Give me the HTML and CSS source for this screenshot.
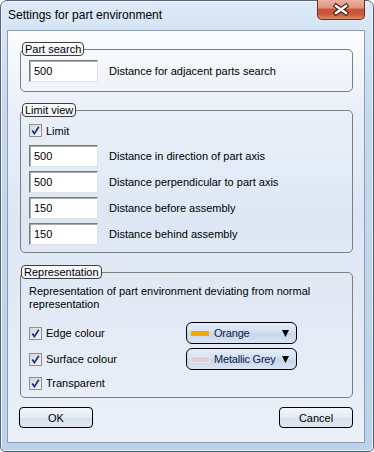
FILE: index.html
```html
<html>

<head>
    <link rel="stylesheet" href="styles.css">
</head>

<body>
    <div class="window">
        <!-- Title bar -->
        <div class="titlebar">
            <span class="title">Settings for part environment</span>
            <div class="close">
                <svg width="48" height="20" viewBox="0 0 48 20">
                    <path d="M19 7 L29 14 M29 7 L19 14" stroke="#4a1c12" stroke-width="4.6" stroke-linecap="square" />
                    <path d="M19 7 L29 14 M29 7 L19 14" stroke="#ffffff" stroke-width="2.4" stroke-linecap="square" />
                </svg>
            </div>
        </div>

        <div class="client">
            <!-- Part search -->
            <fieldset class="group group-search">
                <legend>Part search</legend>
                <div class="field-row">
                    <input class="num" value="500">
                    <span>Distance for adjacent parts search</span>
                </div>
            </fieldset>

            <!-- Limit view -->
            <fieldset class="group group-limit">
                <legend>Limit view</legend>
                <label class="check">
                    <span class="box"><svg width="13" height="13" viewBox="0 0 13 13"><path d="M3.2 6.6 L5.4 9.6 L9.8 2.8" fill="none" stroke="#1a2a8c" stroke-width="1.7" /></svg></span>
                    Limit
                </label>
                <div class="field-list">
                    <div class="field-row">
                        <input class="num" value="500">
                        <span>Distance in direction of part axis</span>
                    </div>
                    <div class="field-row">
                        <input class="num" value="500">
                        <span>Distance perpendicular to part axis</span>
                    </div>
                    <div class="field-row">
                        <input class="num" value="150">
                        <span>Distance before assembly</span>
                    </div>
                    <div class="field-row">
                        <input class="num" value="150">
                        <span>Distance behind assembly</span>
                    </div>
                </div>
            </fieldset>

            <!-- Representation -->
            <fieldset class="group group-repr">
                <legend>Representation</legend>
                <p class="note">Representation of part environment deviating from normal representation</p>
                <div class="repr-grid">
                    <label class="check">
                        <span class="box"><svg width="13" height="13" viewBox="0 0 13 13"><path d="M3.2 6.6 L5.4 9.6 L9.8 2.8" fill="none" stroke="#1a2a8c" stroke-width="1.7" /></svg></span>
                        Edge colour
                    </label>
                    <div class="dropdown">
                        <span class="swatch orange"></span>
                        <span class="dd-text">Orange</span>
                        <svg class="arrow" width="7" height="7" viewBox="0 0 7 7"><polygon points="0,0 7,0 3.5,7" fill="#000" /></svg>
                    </div>

                    <label class="check">
                        <span class="box"><svg width="13" height="13" viewBox="0 0 13 13"><path d="M3.2 6.6 L5.4 9.6 L9.8 2.8" fill="none" stroke="#1a2a8c" stroke-width="1.7" /></svg></span>
                        Surface colour
                    </label>
                    <div class="dropdown">
                        <span class="swatch grey"></span>
                        <span class="dd-text">Metallic Grey</span>
                        <svg class="arrow" width="7" height="7" viewBox="0 0 7 7"><polygon points="0,0 7,0 3.5,7" fill="#000" /></svg>
                    </div>

                    <label class="check last">
                        <span class="box"><svg width="13" height="13" viewBox="0 0 13 13"><path d="M3.2 6.6 L5.4 9.6 L9.8 2.8" fill="none" stroke="#1a2a8c" stroke-width="1.7" /></svg></span>
                        Transparent
                    </label>
                </div>
            </fieldset>

            <!-- Buttons -->
            <div class="buttons">
                <button class="btn">OK</button>
                <button class="btn">Cancel</button>
            </div>
        </div>
    </div>
</body>

</html>
```

FILE: styles.css
```css
* {
    box-sizing: border-box;
}

body {
    margin: 0;
    font-family: "Liberation Sans", Arial, sans-serif;
    background: #ffffff;
}

.window {
    width: 374px;
    height: 452px;
    border: 1px solid #56657c;
    border-radius: 7px 7px 5px 5px;
    background: linear-gradient(#dce9f7, #c6d9ef 25%, #bcd2eb);
    box-shadow: inset 1px 1px 0 #eef4fb, inset -1px -1px 0 #e4edf8;
    padding: 0 8px 8px 6px;
    display: flex;
    flex-direction: column;
}

.titlebar {
    height: 29px;
    display: flex;
    justify-content: space-between;
    align-items: flex-start;
}

.title {
    padding-left: 1px;
    line-height: 29px;
    font-size: 12px;
    color: #000;
}

.close {
    width: 48px;
    height: 20px;
    margin-top: -1px;
    border: 1px solid #6e2a1c;
    border-top: none;
    border-radius: 0 0 5px 5px;
    background: linear-gradient(#eab1a4, #e09380 40%, #c9563c 50%, #c85a3c 75%, #dc8c69);
    overflow: hidden;
}

.close svg {
    display: block;
    margin: -1px 0 0 -1px;
}

.client {
    flex: 1;
    border: 1px solid #8a9cb4;
    background: linear-gradient(#fbfcfe, #e9eff8 20%, #dde7f4 45%, #e3eaf5 70%, #ebf0f8);
    padding: 11px 11px 0 12px;
    font-size: 11px;
    color: #000;
}

/* group boxes */

.group {
    margin: 0;
    min-width: 0;
    border: 1px solid #7d7d7d;
    border-radius: 5px;
    padding: 4px 8px 9px 8px;
}

.group legend {
    margin-left: -7px;
    padding: 0 2px;
    height: 14px;
    line-height: 12px;
    border: 1px solid #3e3e3e;
    border-radius: 4px;
    background: linear-gradient(#ffffff, #eef2f8);
    font-size: 11px;
}

.group-limit {
    margin-top: 11px;
    padding: 7px 8px 7px 8px;
}

.group-repr {
    margin-top: 12px;
    padding: 6px 8px 3px 7px;
}

.field-list {
    display: flex;
    flex-direction: column;
    gap: 4px;
    margin-top: 8px;
}

.field-row {
    display: flex;
    align-items: center;
    gap: 11px;
}

.num {
    width: 69px;
    height: 22px;
    margin: 0;
    padding: 0 0 0 4px;
    border: 1px solid;
    border-color: #7b7b7b #e2e2e2 #e2e2e2 #7b7b7b;
    box-shadow: inset 1px 1px 0 #a9a9a9;
    background: #ffffff;
    font-family: "Liberation Sans", Arial, sans-serif;
    font-size: 11px;
    color: #000;
}

/* checkboxes */

.check {
    display: flex;
    align-items: center;
    gap: 4px;
    height: 13px;
}

.box {
    width: 13px;
    height: 13px;
    border: 1px solid #8e8f8f;
    background: linear-gradient(135deg, #d6d6d6, #f4f4f4);
    display: block;
}

.box svg {
    display: block;
    margin: -1px 0 0 -1px;
}

/* representation */

.note {
    margin: 0 0 0 1px;
    line-height: 13px;
    width: 320px;
}

.repr-grid {
    display: grid;
    grid-template-columns: 157px 111px;
    grid-template-rows: 26px 26px 22px;
    align-items: center;
    margin-top: 9px;
    padding-left: 1px;
}

.dropdown {
    width: 111px;
    height: 22px;
    border: 1px solid #000;
    border-radius: 6px;
    background: linear-gradient(#e6eef8, #d3e0f0 45%, #c6d6ea 55%, #dbe5f2);
    display: flex;
    align-items: center;
    padding: 0 7px 0 4px;
}

.swatch {
    flex-shrink: 0;
    width: 18px;
    height: 5px;
    margin-right: 5px;
}

.orange {
    background: #f7a600;
}

.grey {
    background: #d8d0d5;
    box-shadow: 0 0 0 1px #eeeaf0;
}

.dd-text {
    flex: 1;
    white-space: nowrap;
    overflow: hidden;
    letter-spacing: -0.2px;
    color: #10204a;
}

.arrow {
    flex-shrink: 0;
    display: block;
    margin-left: 2px;
}

/* buttons */

.buttons {
    display: flex;
    justify-content: space-between;
    margin: 9px 0 0 -1px;
}

.btn {
    width: 74px;
    height: 21px;
    margin: 0;
    border: 1px solid #000;
    border-radius: 4px;
    background: linear-gradient(#f3f6fb, #e6edf6 45%, #d8e2ef 55%, #dfe7f2);
    font-family: "Liberation Sans", Arial, sans-serif;
    font-size: 11px;
    color: #000;
}
```
